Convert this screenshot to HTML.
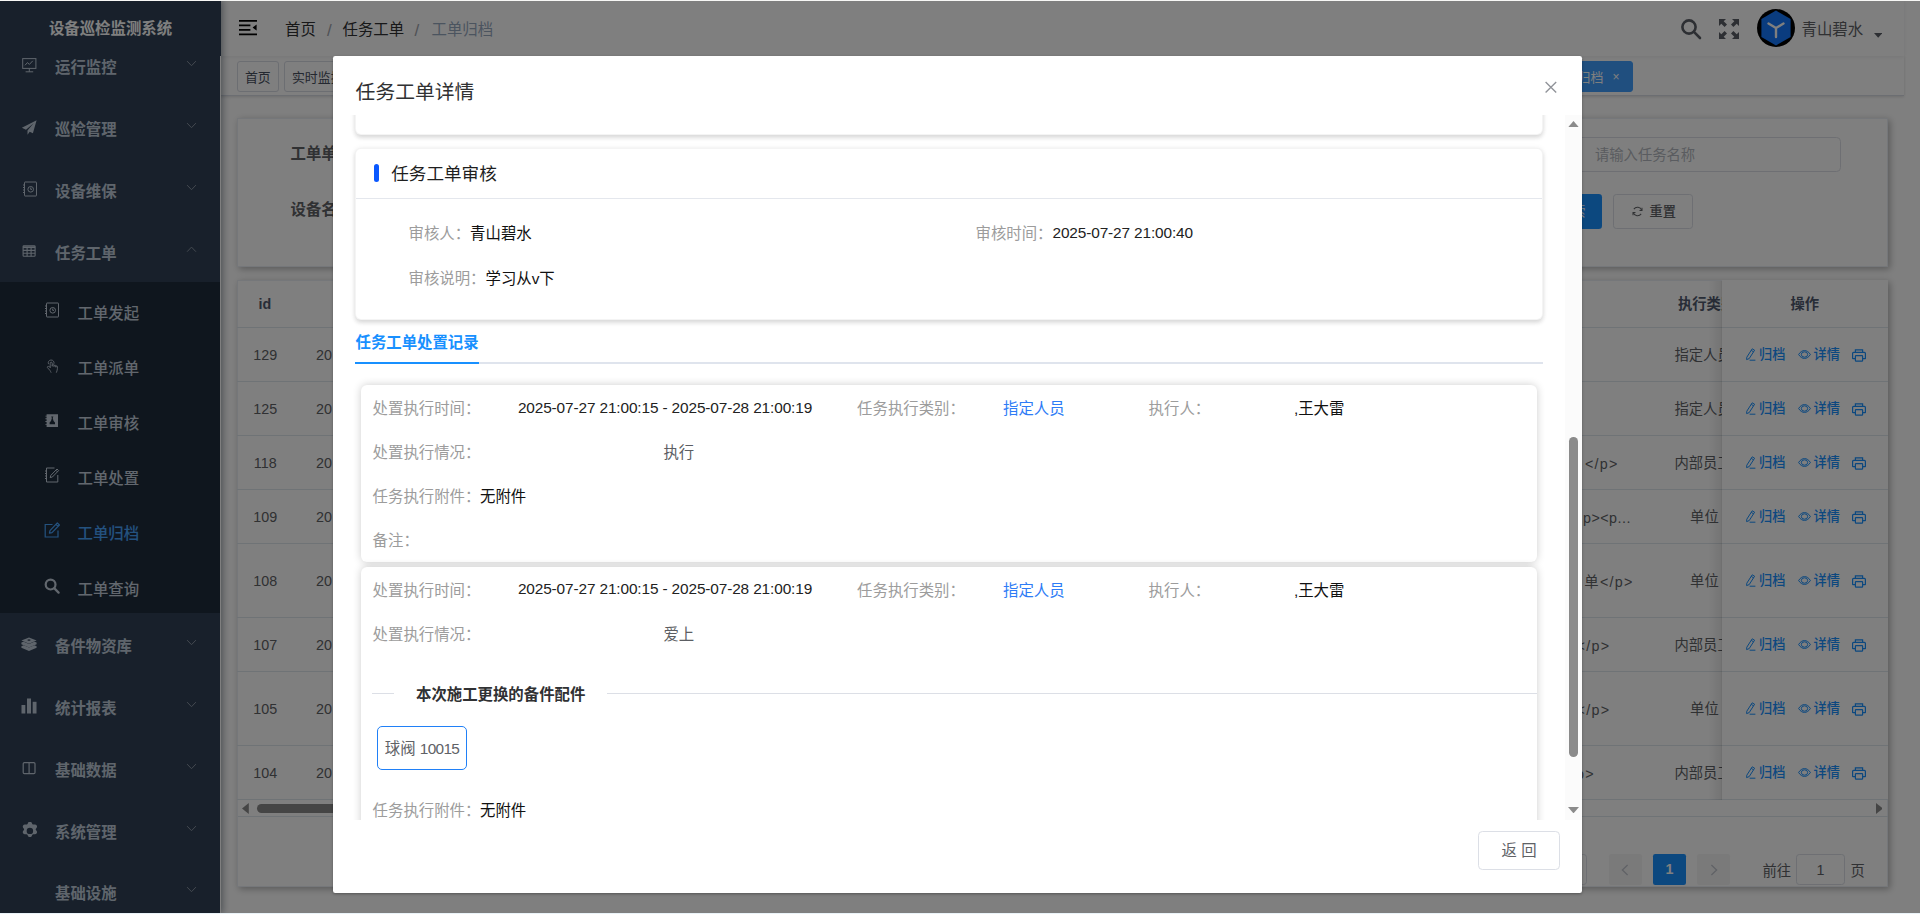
<!DOCTYPE html>
<html lang="zh-CN">
<head>
<meta charset="utf-8">
<title>设备巡检监测系统</title>
<style>
*{box-sizing:border-box;}
html,body{margin:0;padding:0;width:1920px;height:914px;overflow:hidden;background:#fff;
  font-family:"Liberation Sans","Noto Sans CJK SC",sans-serif;color:#303133;}
.abs{position:absolute;}
#page{position:absolute;left:0;top:0;width:1920px;height:914px;overflow:hidden;background:#fff;}
/* ---------- sidebar ---------- */
#sidebar{position:absolute;left:0;top:0;width:220px;height:914px;background:#304156;z-index:5;
  box-shadow:3px 0 7px rgba(0,21,41,.38);}
#logo{position:absolute;left:0;top:0;width:221px;height:56px;background:#304156;color:#fff;font-weight:bold;
  font-size:15.4px;line-height:58px;text-align:center;}
.mi{position:absolute;left:0;width:220px;height:62px;color:#bfcbd9;font-size:15.4px;font-weight:bold;}
.mi .t{position:absolute;left:55px;top:0;line-height:62px;white-space:nowrap;}
.mi svg.ic{position:absolute;left:21.4px;top:19.8px;width:16px;height:16px;}
.mi svg.ar{position:absolute;left:186px;top:21.4px;width:11px;height:11px;}
#submenu{position:absolute;left:0;top:281.5px;width:220px;height:331px;background:#1f2d3d;}
.si{position:absolute;left:0;width:220px;height:55px;color:#c4cfdc;font-size:15.4px;font-weight:500;}
.si .t{position:absolute;left:77.5px;top:0;line-height:55px;white-space:nowrap;}
.si svg.ic{position:absolute;left:44.2px;top:15.8px;width:16px;height:16px;}
.si.act{color:#48a4ff;}
/* ---------- navbar ---------- */
#navbar{position:absolute;left:220px;top:0;width:1684px;height:56px;background:#fff;box-shadow:0 1px 4px rgba(0,21,41,.08);z-index:2;}
#tags{position:absolute;left:220px;top:56px;width:1684px;height:40px;background:#fff;border-bottom:1px solid #d8dce5;
  box-shadow:0 1px 3px 0 rgba(0,0,0,.12),0 0 3px 0 rgba(0,0,0,.04);z-index:1;}
.tag{position:absolute;top:5.2px;height:30.8px;border:1px solid #d8dce5;border-radius:3px;font-size:12.9px;line-height:31px;color:#495060;background:#fff;padding:0 7.2px;white-space:nowrap;}
.tag.act{background:#409eff;color:#fff;border-color:#409eff;}
.bc{position:absolute;top:0;line-height:60px;font-size:15.4px;color:#303133;white-space:nowrap;}
/* ---------- main ---------- */
.card{position:absolute;background:#fff;box-shadow:2px 2px 7px rgba(0,0,0,.3);border:1px solid #ebeef5;}
.lbl{position:absolute;font-size:15.4px;font-weight:bold;color:#606266;white-space:nowrap;}
.th{position:absolute;font-size:14.3px;font-weight:bold;color:#515a6e;white-space:nowrap;line-height:20px;}
.td{position:absolute;font-size:14.3px;color:#606266;white-space:nowrap;line-height:20px;}
.hl{position:absolute;left:0;height:1px;background:#dfe6ec;}
.act-l{position:absolute;font-size:13.2px;font-weight:500;color:#1890ff;white-space:nowrap;line-height:20px;}
.op svg{position:absolute;}
/* ---------- overlay + dialog ---------- */
#overlay{position:absolute;left:0;top:0;width:1920px;height:914px;background:rgba(0,0,0,.5);z-index:10;}
#dlg{position:absolute;left:333px;top:56px;width:1249px;height:837px;background:#fff;border-radius:2.2px;z-index:11;
  box-shadow:0 1px 3px rgba(0,0,0,.3);}
#dlg .title{position:absolute;left:22.6px;top:23px;font-size:19.8px;line-height:26.4px;color:#303133;white-space:nowrap;}
#scroll{position:absolute;left:0;top:59.4px;width:1249px;height:705px;overflow:hidden;}
#track{position:absolute;right:0;top:0;width:17px;height:705px;background:#fbfbfb;}
.dcard{position:absolute;background:#fff;border:1px solid rgba(0,0,0,.045);border-radius:6px;box-shadow:0 2.2px 4.4px rgba(0,0,0,.13),0 0 6.6px rgba(0,0,0,.05);}
.rcard{position:absolute;background:#fff;border-radius:6px;box-shadow:0 0 8px rgba(0,0,0,.2);}
.dl{position:absolute;margin-top:1.3px;font-size:15.4px;line-height:26px;color:#9c9c9c;white-space:nowrap;}
.dv{position:absolute;margin-top:1.3px;font-size:15.4px;line-height:26px;color:#111;white-space:nowrap;}
.rl{position:absolute;margin-top:1.3px;font-size:15.4px;line-height:44px;color:#9c9c9c;white-space:nowrap;}
.rv{position:absolute;margin-top:1.3px;font-size:15.4px;line-height:44px;color:#1a1a1a;white-space:nowrap;}
.rv.blue{color:#2e7cf6;}
.rv.gr{color:#5c5e63;}
</style>
</head>
<body>
<div id="page">

<!-- ================= SIDEBAR ================= -->
<div id="sidebar">
  <div id="submenu"></div>
  <div id="logo">设备巡检监测系统</div>
  <!-- menu items inserted below -->
  <div class="mi" style="top:37.1px"><svg class="ic" viewBox="0 0 16 16" fill="none" stroke="currentColor" stroke-width="1"><rect x="1.7" y="1.6" width="13.2" height="9.8" /><path d="M4 8.3 L6.4 5.6 L8.4 7.4 L11.8 3.8"/><path d="M8.3 11.4 V14.8 M4.6 14.8 H12.2"/></svg><span class="t">运行监控</span><svg class="ar" viewBox="0 0 12 12" fill="none" stroke="#8a95a3" stroke-width="1.05"><path d="M1.2 3.4 L6 8.4 L10.8 3.4"/></svg></div>
  <div class="mi" style="top:99.1px"><svg class="ic" viewBox="0 0 16 16" fill="currentColor"><path d="M15.6 1.2 L0.9 8.8 L5 10.7 L12.6 4.2 L6.5 11.5 L6.5 15.8 L8.7 12.7 L11.9 14.3 Z"/></svg><span class="t">巡检管理</span><svg class="ar" viewBox="0 0 12 12" fill="none" stroke="#8a95a3" stroke-width="1.05"><path d="M1.2 3.4 L6 8.4 L10.8 3.4"/></svg></div>
  <div class="mi" style="top:161.1px"><svg class="ic" style="margin-left:0.9px;margin-top:0.5px" viewBox="0 0 16 16" fill="none" stroke="currentColor" stroke-width="1"><rect x="2.5" y="1" width="12" height="14" rx="0.5"/><circle cx="8.7" cy="8.3" r="2.8"/><path d="M8.7 6.6 V8.4 H10"/><path d="M1 4 H3 M1 6.5 H3 M1 9 H3 M1 11.5 H3" /></svg><span class="t">设备维保</span><svg class="ar" viewBox="0 0 12 12" fill="none" stroke="#8a95a3" stroke-width="1.05"><path d="M1.2 3.4 L6 8.4 L10.8 3.4"/></svg></div>
  <div class="mi" style="top:223.1px"><svg class="ic" viewBox="0 0 16 16" fill="none" stroke="currentColor" stroke-width="1.1"><rect x="2.1" y="2.8" width="12" height="10.4" rx="0.8"/><path d="M2.1 4.2 H14.1" stroke-width="1.8"/><path d="M2.1 7.4 H14.1 M2.1 10.3 H14.1 M6.1 4 V13.2 M10.1 4 V13.2"/></svg><span class="t">任务工单</span><svg class="ar" viewBox="0 0 12 12" fill="none" stroke="#8a95a3" stroke-width="1.05"><path d="M1.2 8.4 L6 3.4 L10.8 8.4"/></svg></div>
  <div class="mi" style="top:616.1px"><svg class="ic" viewBox="0 0 16 16" fill="currentColor"><path d="M8 1.4 L15.6 4.6 L8 7.8 L0.4 4.6 Z M6 4 L8 5 L10 4 L8 3.2 Z" fill-rule="evenodd"/><path d="M0.4 6.6 L2.6 5.7 L8 8 L13.4 5.7 L15.6 6.6 V8.2 L8 11.4 L0.4 8.2 Z"/><path d="M0.4 10.2 L2.6 9.3 L8 11.6 L13.4 9.3 L15.6 10.2 V11.8 L8 15 L0.4 11.8 Z"/></svg><span class="t">备件物资库</span><svg class="ar" viewBox="0 0 12 12" fill="none" stroke="#8a95a3" stroke-width="1.05"><path d="M1.2 3.4 L6 8.4 L10.8 3.4"/></svg></div>
  <div class="mi" style="top:678.1px"><svg class="ic" viewBox="0 0 16 16" fill="currentColor"><rect x="0.5" y="7" width="3.8" height="8.5"/><rect x="6" y="0.5" width="4" height="15"/><rect x="11.7" y="3.8" width="3.8" height="11.7"/></svg><span class="t">统计报表</span><svg class="ar" viewBox="0 0 12 12" fill="none" stroke="#8a95a3" stroke-width="1.05"><path d="M1.2 3.4 L6 8.4 L10.8 3.4"/></svg></div>
  <div class="mi" style="top:740.1px"><svg class="ic" viewBox="0 0 16 16" fill="none" stroke="currentColor" stroke-width="1.2"><rect x="2.2" y="2.6" width="11.8" height="11" rx="1.2"/><path d="M8.1 2.6 V13.6"/></svg><span class="t">基础数据</span><svg class="ar" viewBox="0 0 12 12" fill="none" stroke="#8a95a3" stroke-width="1.05"><path d="M1.2 3.4 L6 8.4 L10.8 3.4"/></svg></div>
  <div class="mi" style="top:801.6px"><svg class="ic" style="width:17.8px;height:17.8px;margin-left:-0.6px;margin-top:0.6px" viewBox="0 0 16 16" fill="currentColor"><path fill-rule="evenodd" d="M6.3 0.8 a1.9 1.9 0 0 1 3.4 0 l0.5 1 a1 1 0 0 0 1 0.5 l1.2 -0.1 a1.9 1.9 0 0 1 1.7 2.9 l-0.7 1 a1 1 0 0 0 0 1.1 l0.7 1 a1.9 1.9 0 0 1 -1.7 2.9 l-1.2 -0.1 a1 1 0 0 0 -1 0.5 l-0.5 1 a1.9 1.9 0 0 1 -3.4 0 l-0.5 -1 a1 1 0 0 0 -1 -0.5 l-1.2 0.1 a1.9 1.9 0 0 1 -1.7 -2.9 l0.7 -1 a1 1 0 0 0 0 -1.1 l-0.7 -1 a1.9 1.9 0 0 1 1.7 -2.9 l1.2 0.1 a1 1 0 0 0 1 -0.5 Z M8 5.1 a2.9 2.9 0 1 0 0 5.8 a2.9 2.9 0 1 0 0 -5.8 Z"/></svg><span class="t">系统管理</span><svg class="ar" viewBox="0 0 12 12" fill="none" stroke="#8a95a3" stroke-width="1.05"><path d="M1.2 3.4 L6 8.4 L10.8 3.4"/></svg></div>
  <div class="mi" style="top:863.1px"><span class="t">基础设施</span><svg class="ar" viewBox="0 0 12 12" fill="none" stroke="#8a95a3" stroke-width="1.05"><path d="M1.2 3.4 L6 8.4 L10.8 3.4"/></svg></div>
  <div class="si" style="top:286.2px"><svg class="ic" viewBox="0 0 16 16" fill="none" stroke="currentColor" stroke-width="1"><rect x="2.5" y="1" width="12" height="14" rx="0.5"/><circle cx="8.7" cy="8.3" r="2.8"/><path d="M8.7 6.6 V8.4 H10"/><path d="M1 4 H3 M1 6.5 H3 M1 9 H3 M1 11.5 H3" /></svg><span class="t">工单发起</span></div>
  <div class="si" style="top:341.2px"><svg class="ic" style="height:14.2px;margin-top:1.6px" preserveAspectRatio="none" viewBox="0 0 16 16" fill="none" stroke="currentColor" stroke-width="0.9" stroke-linecap="round" stroke-linejoin="round"><path d="M6.2 9.5 V4.6 a1 1 0 0 1 2 0 V8 M8.2 7.2 a0.9 0.9 0 0 1 1.8 0 V8.4 M10 7.8 a0.9 0.9 0 0 1 1.8 0 V9 M11.8 8.6 a0.8 0.8 0 0 1 1.6 0 V11 c0 2 -0.8 3 -1 4 M6.2 9.2 L4.6 8.4 a0.9 0.9 0 0 0 -1.2 1.2 L6 13 c0.4 0.8 0.8 1.4 1 2"/><path d="M4.4 5.4 a3 3 0 1 1 5.6 -0.4"/></svg><span class="t">工单派单</span></div>
  <div class="si" style="top:396.2px"><svg class="ic" style="height:15px;margin-top:1.3px" preserveAspectRatio="none" viewBox="0 0 16 16" fill="currentColor"><path d="M2.6 1.2 H14 V14.8 H2.6 V12.6 H1.4 V11.6 H2.6 V9.6 H1.4 V8.6 H2.6 V6.6 H1.4 V5.6 H2.6 V3.8 H1.4 V2.8 H2.6 Z M7.2 3.6 L7.9 5.2 L7 8.4 L5.6 10.2 V12 H11 V10.2 L9.6 8.4 L8.7 5.2 L9.4 3.6 Z" fill-rule="evenodd"/></svg><span class="t">工单审核</span></div>
  <div class="si" style="top:451.2px"><svg class="ic" viewBox="0 0 16 16" fill="none" stroke="currentColor" stroke-width="1"><path d="M13.8 8 V15 H2.5 V1 H10.5"/><path d="M1 4 H3 M1 6.5 H3 M1 9 H3 M1 11.5 H3"/><path d="M13 2 L14.6 3.6 L8.4 10 L6.2 10.6 L6.8 8.4 Z M11.8 3.2 L13.4 4.8" stroke-linejoin="round"/></svg><span class="t">工单处置</span></div>
  <div class="si act" style="top:506.2px"><svg class="ic" viewBox="0 0 16 16" fill="none" stroke="currentColor" stroke-width="1.2"><path d="M14 8.5 V15 H1.2 V2.5 H8.5"/><path d="M13.3 0.9 L15.4 3 L8 10.6 L5.4 11.2 L6 8.6 Z M12 2.3 L14 4.3" stroke-linejoin="round"/></svg><span class="t">工单归档</span></div>
  <div class="si" style="top:562.2px"><svg class="ic" viewBox="0 0 16 16" fill="none" stroke="currentColor" stroke-width="2.2" stroke-linecap="round"><circle cx="6.6" cy="6.6" r="4.9"/><path d="M10.4 10.4 L14.6 14.6"/></svg><span class="t">工单查询</span></div>
  <div class="abs" style="left:220px;top:56px;width:1px;height:858px;background:#fff;"></div>
</div>

<!-- ================= NAVBAR ================= -->
<div id="navbar">
  <svg class="abs" style="left:19px;top:19.2px;width:18px;height:17px" viewBox="0 0 18 17" fill="none" stroke="#000" stroke-width="1.75"><path d="M0 1.8 H18 M0 6.3 H11.4 M0 10.8 H11.4 M0 15.3 H18"/><path d="M17.6 5.6 V11.6 L13.6 8.6 Z" fill="#000" stroke="none"/></svg>
  <span class="bc" style="left:65px;">首页</span>
  <span class="bc" style="left:107px;color:#9ea3ab;font-size:17px;line-height:62.5px;">/</span>
  <span class="bc" style="left:122.5px;">任务工单</span>
  <span class="bc" style="left:194.5px;color:#9ea3ab;font-size:17px;line-height:62.5px;">/</span>
  <span class="bc" style="left:211.5px;color:#97a8be;">工单归档</span>
  <svg class="abs" style="left:1460px;top:18px;width:22px;height:22px" viewBox="0 0 22 22" fill="none" stroke="#5a5e66" stroke-width="2.6" stroke-linecap="round"><circle cx="9" cy="9" r="6.6"/><path d="M14.2 14.2 L20 20"/></svg>
  <svg class="abs" style="left:1499px;top:19px;width:20px;height:20px" viewBox="0 0 20 20" fill="#5a5e66"><path d="M0 0 H7 L4.7 2.3 L8 5.6 L5.6 8 L2.3 4.7 L0 7 Z"/><path d="M20 0 V7 L17.7 4.7 L14.4 8 L12 5.6 L15.3 2.3 L13 0 Z"/><path d="M0 20 V13 L2.3 15.3 L5.6 12 L8 14.4 L4.7 17.7 L7 20 Z"/><path d="M20 20 H13 L15.3 17.7 L12 14.4 L14.4 12 L17.7 15.3 L20 13 Z"/></svg>
  <svg class="abs" style="left:1537px;top:9.4px;width:38px;height:38px" viewBox="0 0 38 38"><circle cx="19" cy="19" r="19" fill="#000"/><path d="M19 1.6 L33.6 10 V28 L19 36.4 L4.4 28 V10 Z" fill="#1478ff"/><path d="M19 19 V28 M19 19 L11.5 14.5 M19 19 L26.5 14.5" stroke="#fff" stroke-width="2.4" stroke-linecap="round" fill="none"/></svg>
  <span class="abs" style="left:1581.5px;top:0;line-height:60px;font-size:15.4px;color:#606266;white-space:nowrap;">青山碧水</span>
  <svg class="abs" style="left:1653.6px;top:33.4px;width:8.4px;height:4.8px" viewBox="0 0 8.4 4.8"><path d="M0 0 H8.4 L4.2 4.8 Z" fill="#5a5e66"/></svg>
</div>
<div id="tags">
  <span class="tag" style="left:16.8px;">首页</span>
  <span class="tag" style="left:63.8px;">实时监控</span>
  <span class="tag act" style="left:1300px;width:113px;text-align:right;padding-right:0;"><span style="position:absolute;right:28.6px;top:0;">工单归档</span><span style="position:absolute;right:12.6px;top:0;font-size:12px;">×</span></span>
</div>

<!-- ================= MAIN ================= -->
<div id="main">
<div class="card" style="left:237px;top:117.6px;width:1651px;height:149px;"></div>
<span class="lbl" style="left:290.5px;top:143px;line-height:22px;">工单单号</span>
<span class="lbl" style="left:290.5px;top:199px;line-height:22px;">设备名称</span>
<div class="abs" style="left:1500px;top:137.4px;width:341.3px;height:34.6px;border:1px solid #dcdfe6;border-radius:4.4px;"></div>
<span class="abs" style="left:1595px;top:144.5px;font-size:14.3px;line-height:20px;color:#b4b8c0;white-space:nowrap;">请输入任务名称</span>
<div class="abs" style="left:1520px;top:194px;width:81.8px;height:35px;background:#1890ff;border-radius:3.3px;"></div>
<span class="abs" style="left:1559px;top:201.5px;font-size:13.2px;line-height:20px;color:#fff;white-space:nowrap;">搜索</span>
<div class="abs" style="left:1613.2px;top:194px;width:79.4px;height:35px;border:1px solid #dcdfe6;border-radius:3.3px;"></div>
<svg class="abs" style="left:1631.5px;top:205.5px;width:11px;height:11px" viewBox="0 0 12 12" fill="none" stroke="#606266" stroke-width="1.1"><path d="M10.6 4.6 A4.9 4.9 0 0 0 2 3.4 M1.4 7.4 A4.9 4.9 0 0 0 10 8.6"/><path d="M10.9 2 V4.8 H8.2 M1.1 10 V7.2 H3.8"/></svg>
<span class="abs" style="left:1649.5px;top:201.5px;font-size:13.2px;line-height:20px;font-weight:500;color:#606266;white-space:nowrap;">重置</span>
<div class="card" style="left:237px;top:279.7px;width:1651px;height:607px;"></div>
<div class="abs" style="left:237px;top:279.7px;width:1484.5px;height:540px;overflow:hidden;"><span class="th" style="left:21.5px;top:14.5px;">id</span><span class="th" style="left:1441px;top:14.5px;">执行类别</span><div class="hl" style="top:47.5px;width:1651px;"></div><div class="hl" style="top:101.6px;width:1651px;"></div><span class="td" style="left:0;width:56.4px;text-align:center;top:65.1px;">129</span><span class="td" style="left:79px;top:65.1px;width:16.1px;overflow:hidden;">2025-07-27</span><span class="td" style="left:1437.5px;top:65.2px;">指定人员</span><div class="hl" style="top:155.7px;width:1651px;"></div><span class="td" style="left:0;width:56.4px;text-align:center;top:119.2px;">125</span><span class="td" style="left:79px;top:119.2px;width:16.1px;overflow:hidden;">2025-07-27</span><span class="td" style="left:1437.5px;top:119.3px;">指定人员</span><div class="hl" style="top:209.7px;width:1651px;"></div><span class="td" style="left:0;width:56.4px;text-align:center;top:173.2px;">118</span><span class="td" style="left:79px;top:173.2px;width:16.1px;overflow:hidden;">2025-07-27</span><span class="td" style="left:1437.5px;top:173.3px;">内部员工</span><span class="td" style="right:102.8px;top:174.1px;letter-spacing:1.3px;">&lt;/p&gt;</span><div class="hl" style="top:263.6px;width:1651px;"></div><span class="td" style="left:0;width:56.4px;text-align:center;top:227.1px;">109</span><span class="td" style="left:79px;top:227.1px;width:16.1px;overflow:hidden;">2025-07-27</span><span class="td" style="left:1453.1px;top:227.2px;">单位</span><span class="td" style="right:90.5px;top:228.0px;letter-spacing:0.5px;">p&gt;&lt;p...</span><div class="hl" style="top:337.8px;width:1651px;"></div><span class="td" style="left:0;width:56.4px;text-align:center;top:291.2px;">108</span><span class="td" style="left:79px;top:291.2px;width:16.1px;overflow:hidden;">2025-07-27</span><span class="td" style="left:1453.1px;top:291.3px;">单位</span><span class="td" style="right:87.8px;top:292.1px;letter-spacing:1.3px;">单&lt;/p&gt;</span><div class="hl" style="top:391.6px;width:1651px;"></div><span class="td" style="left:0;width:56.4px;text-align:center;top:355.2px;">107</span><span class="td" style="left:79px;top:355.2px;width:16.1px;overflow:hidden;">2025-07-27</span><span class="td" style="left:1437.5px;top:355.3px;">内部员工</span><span class="td" style="right:111.2px;top:356.1px;letter-spacing:1.3px;">&lt;/p&gt;</span><div class="hl" style="top:465.6px;width:1651px;"></div><span class="td" style="left:0;width:56.4px;text-align:center;top:419.1px;">105</span><span class="td" style="left:79px;top:419.1px;width:16.1px;overflow:hidden;">2025-07-27</span><span class="td" style="left:1453.1px;top:419.2px;">单位</span><span class="td" style="right:111.2px;top:420.0px;letter-spacing:1.3px;">&lt;/p&gt;</span><div class="hl" style="top:519.6px;width:1651px;"></div><span class="td" style="left:0;width:56.4px;text-align:center;top:483.1px;">104</span><span class="td" style="left:79px;top:483.1px;width:16.1px;overflow:hidden;">2025-07-27</span><span class="td" style="left:1437.5px;top:483.2px;">内部员工</span><span class="td" style="right:126.7px;top:484.0px;letter-spacing:1.3px;">p&gt;</span></div>
<div class="abs op" style="left:1721.5px;top:279.7px;width:166.5px;height:520.3px;background:#fff;overflow:hidden;"><span class="th" style="left:0;width:166.5px;text-align:center;top:14.5px;">操作</span><div class="hl" style="top:101.6px;width:166.5px;"></div><svg style="left:23.6px;top:68.6px;width:11px;height:13px" viewBox="0 0 11 13" fill="none" stroke="#1890ff" stroke-width="1"><path d="M7.2 0.8 L9.6 2.2 L4.2 10.6 L1.6 11.6 L1.8 9.2 Z M6.2 2.4 L8.6 3.8"/><path d="M4.6 12.2 H10.4"/></svg><span class="act-l" style="left:37.6px;top:65.2px;">归档</span><svg style="left:76.9px;top:70.0px;width:13px;height:9px" viewBox="0 0 13 9" fill="none" stroke="#1890ff" stroke-width="1"><path d="M0.6 4.5 C2.6 1.4 4.6 0.6 6.5 0.6 C8.4 0.6 10.4 1.4 12.4 4.5 C10.4 7.6 8.4 8.4 6.5 8.4 C4.6 8.4 2.6 7.6 0.6 4.5 Z"/><ellipse cx="6.5" cy="4.5" rx="3.2" ry="2.7"/></svg><span class="act-l" style="left:92px;top:65.2px;">详情</span><svg style="left:130.5px;top:69.4px;width:14px;height:13px" viewBox="0 0 14 13" fill="none" stroke="#1890ff" stroke-width="1.2"><path d="M3.4 3.4 V0.8 H10.6 V3.4"/><path d="M3.4 9.6 H1 a0.4 0.4 0 0 1 -0.4 -0.4 V4.4 a1 1 0 0 1 1 -1 H12.4 a1 1 0 0 1 1 1 V9.2 a0.4 0.4 0 0 1 -0.4 0.4 H10.6"/><rect x="3.4" y="6.6" width="7.2" height="5.6" rx="0.6"/></svg><div class="hl" style="top:155.7px;width:166.5px;"></div><svg style="left:23.6px;top:122.7px;width:11px;height:13px" viewBox="0 0 11 13" fill="none" stroke="#1890ff" stroke-width="1"><path d="M7.2 0.8 L9.6 2.2 L4.2 10.6 L1.6 11.6 L1.8 9.2 Z M6.2 2.4 L8.6 3.8"/><path d="M4.6 12.2 H10.4"/></svg><span class="act-l" style="left:37.6px;top:119.3px;">归档</span><svg style="left:76.9px;top:124.1px;width:13px;height:9px" viewBox="0 0 13 9" fill="none" stroke="#1890ff" stroke-width="1"><path d="M0.6 4.5 C2.6 1.4 4.6 0.6 6.5 0.6 C8.4 0.6 10.4 1.4 12.4 4.5 C10.4 7.6 8.4 8.4 6.5 8.4 C4.6 8.4 2.6 7.6 0.6 4.5 Z"/><ellipse cx="6.5" cy="4.5" rx="3.2" ry="2.7"/></svg><span class="act-l" style="left:92px;top:119.3px;">详情</span><svg style="left:130.5px;top:123.5px;width:14px;height:13px" viewBox="0 0 14 13" fill="none" stroke="#1890ff" stroke-width="1.2"><path d="M3.4 3.4 V0.8 H10.6 V3.4"/><path d="M3.4 9.6 H1 a0.4 0.4 0 0 1 -0.4 -0.4 V4.4 a1 1 0 0 1 1 -1 H12.4 a1 1 0 0 1 1 1 V9.2 a0.4 0.4 0 0 1 -0.4 0.4 H10.6"/><rect x="3.4" y="6.6" width="7.2" height="5.6" rx="0.6"/></svg><div class="hl" style="top:209.7px;width:166.5px;"></div><svg style="left:23.6px;top:176.7px;width:11px;height:13px" viewBox="0 0 11 13" fill="none" stroke="#1890ff" stroke-width="1"><path d="M7.2 0.8 L9.6 2.2 L4.2 10.6 L1.6 11.6 L1.8 9.2 Z M6.2 2.4 L8.6 3.8"/><path d="M4.6 12.2 H10.4"/></svg><span class="act-l" style="left:37.6px;top:173.3px;">归档</span><svg style="left:76.9px;top:178.1px;width:13px;height:9px" viewBox="0 0 13 9" fill="none" stroke="#1890ff" stroke-width="1"><path d="M0.6 4.5 C2.6 1.4 4.6 0.6 6.5 0.6 C8.4 0.6 10.4 1.4 12.4 4.5 C10.4 7.6 8.4 8.4 6.5 8.4 C4.6 8.4 2.6 7.6 0.6 4.5 Z"/><ellipse cx="6.5" cy="4.5" rx="3.2" ry="2.7"/></svg><span class="act-l" style="left:92px;top:173.3px;">详情</span><svg style="left:130.5px;top:177.5px;width:14px;height:13px" viewBox="0 0 14 13" fill="none" stroke="#1890ff" stroke-width="1.2"><path d="M3.4 3.4 V0.8 H10.6 V3.4"/><path d="M3.4 9.6 H1 a0.4 0.4 0 0 1 -0.4 -0.4 V4.4 a1 1 0 0 1 1 -1 H12.4 a1 1 0 0 1 1 1 V9.2 a0.4 0.4 0 0 1 -0.4 0.4 H10.6"/><rect x="3.4" y="6.6" width="7.2" height="5.6" rx="0.6"/></svg><div class="hl" style="top:263.6px;width:166.5px;"></div><svg style="left:23.6px;top:230.6px;width:11px;height:13px" viewBox="0 0 11 13" fill="none" stroke="#1890ff" stroke-width="1"><path d="M7.2 0.8 L9.6 2.2 L4.2 10.6 L1.6 11.6 L1.8 9.2 Z M6.2 2.4 L8.6 3.8"/><path d="M4.6 12.2 H10.4"/></svg><span class="act-l" style="left:37.6px;top:227.2px;">归档</span><svg style="left:76.9px;top:232.0px;width:13px;height:9px" viewBox="0 0 13 9" fill="none" stroke="#1890ff" stroke-width="1"><path d="M0.6 4.5 C2.6 1.4 4.6 0.6 6.5 0.6 C8.4 0.6 10.4 1.4 12.4 4.5 C10.4 7.6 8.4 8.4 6.5 8.4 C4.6 8.4 2.6 7.6 0.6 4.5 Z"/><ellipse cx="6.5" cy="4.5" rx="3.2" ry="2.7"/></svg><span class="act-l" style="left:92px;top:227.2px;">详情</span><svg style="left:130.5px;top:231.4px;width:14px;height:13px" viewBox="0 0 14 13" fill="none" stroke="#1890ff" stroke-width="1.2"><path d="M3.4 3.4 V0.8 H10.6 V3.4"/><path d="M3.4 9.6 H1 a0.4 0.4 0 0 1 -0.4 -0.4 V4.4 a1 1 0 0 1 1 -1 H12.4 a1 1 0 0 1 1 1 V9.2 a0.4 0.4 0 0 1 -0.4 0.4 H10.6"/><rect x="3.4" y="6.6" width="7.2" height="5.6" rx="0.6"/></svg><div class="hl" style="top:337.8px;width:166.5px;"></div><svg style="left:23.6px;top:294.7px;width:11px;height:13px" viewBox="0 0 11 13" fill="none" stroke="#1890ff" stroke-width="1"><path d="M7.2 0.8 L9.6 2.2 L4.2 10.6 L1.6 11.6 L1.8 9.2 Z M6.2 2.4 L8.6 3.8"/><path d="M4.6 12.2 H10.4"/></svg><span class="act-l" style="left:37.6px;top:291.3px;">归档</span><svg style="left:76.9px;top:296.1px;width:13px;height:9px" viewBox="0 0 13 9" fill="none" stroke="#1890ff" stroke-width="1"><path d="M0.6 4.5 C2.6 1.4 4.6 0.6 6.5 0.6 C8.4 0.6 10.4 1.4 12.4 4.5 C10.4 7.6 8.4 8.4 6.5 8.4 C4.6 8.4 2.6 7.6 0.6 4.5 Z"/><ellipse cx="6.5" cy="4.5" rx="3.2" ry="2.7"/></svg><span class="act-l" style="left:92px;top:291.3px;">详情</span><svg style="left:130.5px;top:295.5px;width:14px;height:13px" viewBox="0 0 14 13" fill="none" stroke="#1890ff" stroke-width="1.2"><path d="M3.4 3.4 V0.8 H10.6 V3.4"/><path d="M3.4 9.6 H1 a0.4 0.4 0 0 1 -0.4 -0.4 V4.4 a1 1 0 0 1 1 -1 H12.4 a1 1 0 0 1 1 1 V9.2 a0.4 0.4 0 0 1 -0.4 0.4 H10.6"/><rect x="3.4" y="6.6" width="7.2" height="5.6" rx="0.6"/></svg><div class="hl" style="top:391.6px;width:166.5px;"></div><svg style="left:23.6px;top:358.7px;width:11px;height:13px" viewBox="0 0 11 13" fill="none" stroke="#1890ff" stroke-width="1"><path d="M7.2 0.8 L9.6 2.2 L4.2 10.6 L1.6 11.6 L1.8 9.2 Z M6.2 2.4 L8.6 3.8"/><path d="M4.6 12.2 H10.4"/></svg><span class="act-l" style="left:37.6px;top:355.3px;">归档</span><svg style="left:76.9px;top:360.1px;width:13px;height:9px" viewBox="0 0 13 9" fill="none" stroke="#1890ff" stroke-width="1"><path d="M0.6 4.5 C2.6 1.4 4.6 0.6 6.5 0.6 C8.4 0.6 10.4 1.4 12.4 4.5 C10.4 7.6 8.4 8.4 6.5 8.4 C4.6 8.4 2.6 7.6 0.6 4.5 Z"/><ellipse cx="6.5" cy="4.5" rx="3.2" ry="2.7"/></svg><span class="act-l" style="left:92px;top:355.3px;">详情</span><svg style="left:130.5px;top:359.5px;width:14px;height:13px" viewBox="0 0 14 13" fill="none" stroke="#1890ff" stroke-width="1.2"><path d="M3.4 3.4 V0.8 H10.6 V3.4"/><path d="M3.4 9.6 H1 a0.4 0.4 0 0 1 -0.4 -0.4 V4.4 a1 1 0 0 1 1 -1 H12.4 a1 1 0 0 1 1 1 V9.2 a0.4 0.4 0 0 1 -0.4 0.4 H10.6"/><rect x="3.4" y="6.6" width="7.2" height="5.6" rx="0.6"/></svg><div class="hl" style="top:465.6px;width:166.5px;"></div><svg style="left:23.6px;top:422.6px;width:11px;height:13px" viewBox="0 0 11 13" fill="none" stroke="#1890ff" stroke-width="1"><path d="M7.2 0.8 L9.6 2.2 L4.2 10.6 L1.6 11.6 L1.8 9.2 Z M6.2 2.4 L8.6 3.8"/><path d="M4.6 12.2 H10.4"/></svg><span class="act-l" style="left:37.6px;top:419.2px;">归档</span><svg style="left:76.9px;top:424.0px;width:13px;height:9px" viewBox="0 0 13 9" fill="none" stroke="#1890ff" stroke-width="1"><path d="M0.6 4.5 C2.6 1.4 4.6 0.6 6.5 0.6 C8.4 0.6 10.4 1.4 12.4 4.5 C10.4 7.6 8.4 8.4 6.5 8.4 C4.6 8.4 2.6 7.6 0.6 4.5 Z"/><ellipse cx="6.5" cy="4.5" rx="3.2" ry="2.7"/></svg><span class="act-l" style="left:92px;top:419.2px;">详情</span><svg style="left:130.5px;top:423.4px;width:14px;height:13px" viewBox="0 0 14 13" fill="none" stroke="#1890ff" stroke-width="1.2"><path d="M3.4 3.4 V0.8 H10.6 V3.4"/><path d="M3.4 9.6 H1 a0.4 0.4 0 0 1 -0.4 -0.4 V4.4 a1 1 0 0 1 1 -1 H12.4 a1 1 0 0 1 1 1 V9.2 a0.4 0.4 0 0 1 -0.4 0.4 H10.6"/><rect x="3.4" y="6.6" width="7.2" height="5.6" rx="0.6"/></svg><div class="hl" style="top:519.6px;width:166.5px;"></div><svg style="left:23.6px;top:486.6px;width:11px;height:13px" viewBox="0 0 11 13" fill="none" stroke="#1890ff" stroke-width="1"><path d="M7.2 0.8 L9.6 2.2 L4.2 10.6 L1.6 11.6 L1.8 9.2 Z M6.2 2.4 L8.6 3.8"/><path d="M4.6 12.2 H10.4"/></svg><span class="act-l" style="left:37.6px;top:483.2px;">归档</span><svg style="left:76.9px;top:488.0px;width:13px;height:9px" viewBox="0 0 13 9" fill="none" stroke="#1890ff" stroke-width="1"><path d="M0.6 4.5 C2.6 1.4 4.6 0.6 6.5 0.6 C8.4 0.6 10.4 1.4 12.4 4.5 C10.4 7.6 8.4 8.4 6.5 8.4 C4.6 8.4 2.6 7.6 0.6 4.5 Z"/><ellipse cx="6.5" cy="4.5" rx="3.2" ry="2.7"/></svg><span class="act-l" style="left:92px;top:483.2px;">详情</span><svg style="left:130.5px;top:487.4px;width:14px;height:13px" viewBox="0 0 14 13" fill="none" stroke="#1890ff" stroke-width="1.2"><path d="M3.4 3.4 V0.8 H10.6 V3.4"/><path d="M3.4 9.6 H1 a0.4 0.4 0 0 1 -0.4 -0.4 V4.4 a1 1 0 0 1 1 -1 H12.4 a1 1 0 0 1 1 1 V9.2 a0.4 0.4 0 0 1 -0.4 0.4 H10.6"/><rect x="3.4" y="6.6" width="7.2" height="5.6" rx="0.6"/></svg><div class="hl" style="top:47.5px;width:166.5px;"></div></div>
<div class="abs" style="left:1707.5px;top:280.7px;width:14px;height:519px;background:linear-gradient(to right,rgba(0,0,0,0),rgba(0,0,0,.09));"></div>
<div class="abs" style="left:1721px;top:280.7px;width:1px;height:519px;background:rgba(0,0,0,.035);"></div>
<div class="abs" style="left:238px;top:816px;width:1650px;height:1px;background:#dfe6ec;"></div>
<svg class="abs" style="left:241.9px;top:803px;width:6.8px;height:11px" viewBox="0 0 6.8 11"><path d="M6.8 0 V11 L0 5.5 Z" fill="#8b8b8b"/></svg>
<svg class="abs" style="left:1875.6px;top:803px;width:6.8px;height:11px" viewBox="0 0 6.8 11"><path d="M0 0 V11 L6.8 5.5 Z" fill="#8b8b8b"/></svg>
<div class="abs" style="left:257px;top:804.2px;width:400px;height:9px;border-radius:4.5px;background:#8b8b8b;"></div>
<div class="abs" style="left:1480px;top:854.4px;width:106.7px;height:30.4px;border:1px solid #dcdfe6;border-radius:3.3px;"></div>
<div class="abs" style="left:1609.2px;top:854.4px;width:32.6px;height:30.4px;background:#f4f4f5;border-radius:2.2px;"></div>
<svg class="abs" style="left:1620.5px;top:863.5px;width:8px;height:12px" viewBox="0 0 8 12" fill="none" stroke="#c0c4cc" stroke-width="1.3"><path d="M6.6 1 L1.4 6 L6.6 11"/></svg>
<div class="abs" style="left:1653.1px;top:854px;width:32.8px;height:30.8px;background:#1890ff;border-radius:2.2px;color:#fff;font-weight:bold;font-size:14.3px;line-height:31.8px;text-align:center;">1</div>
<div class="abs" style="left:1696.9px;top:854.4px;width:32.9px;height:30.4px;background:#f4f4f5;border-radius:2.2px;"></div>
<svg class="abs" style="left:1709.5px;top:863.5px;width:8px;height:12px" viewBox="0 0 8 12" fill="none" stroke="#c0c4cc" stroke-width="1.3"><path d="M1.4 1 L6.6 6 L1.4 11"/></svg>
<span class="abs" style="left:1762.5px;top:860.5px;font-size:14.3px;line-height:20px;color:#606266;white-space:nowrap;">前往</span>
<div class="abs" style="left:1795.5px;top:854.4px;width:49.8px;height:30.4px;border:1px solid #dcdfe6;border-radius:3.3px;color:#606266;font-size:14.3px;line-height:31.4px;text-align:center;">1</div>
<span class="abs" style="left:1850.5px;top:860.5px;font-size:14.3px;line-height:20px;color:#606266;white-space:nowrap;">页</span>
</div>

<!-- ================= OVERLAY ================= -->
<div id="overlay"></div>

<!-- ================= DIALOG ================= -->
<div id="dlg">
  <div class="title">任务工单详情</div>
  <div id="scroll">
<div id="track"></div>
<svg class="abs" style="left:1235.0px;top:5.5px;width:11px;height:6.4px" viewBox="0 0 11 6.4"><path d="M0 6.4 H11 L5.5 0 Z" fill="#8b8b8b"/></svg>
<svg class="abs" style="left:1235.0px;top:691.4px;width:11px;height:6.4px" viewBox="0 0 11 6.4"><path d="M0 0 H11 L5.5 6.4 Z" fill="#8b8b8b"/></svg>
<div class="abs" style="left:1236.2px;top:321.6px;width:8.8px;height:320px;border-radius:4.4px;background:#8b8b8b;"></div>
<div class="dcard" style="left:22.0px;top:-60px;width:1188px;height:79.8px;"></div>
<div class="dcard" style="left:22.0px;top:32.6px;width:1188px;height:171.7px;"></div>
<div class="abs" style="left:23.0px;top:82.6px;width:1186px;height:1px;background:#e4e7ed;"></div>
<div class="abs" style="left:41.2px;top:48.9px;width:5px;height:17.6px;border-radius:2.5px;background:#0a58ff;"></div>
<span class="abs" style="left:58.2px;top:45.9px;font-size:17.6px;line-height:26px;color:#1f1f1f;white-space:nowrap;">任务工单审核</span>
<span class="dl" style="left:75.5px;top:104.6px;">审核人：</span>
<span class="dv" style="left:137.1px;top:104.6px;">青山碧水</span>
<span class="dl" style="left:642.5px;top:104.6px;">审核时间：</span>
<span class="dv" style="left:719.5px;top:104.6px;color:#222;letter-spacing:-0.13px;margin-top:0.1px;">2025-07-27 21:00:40</span>
<span class="dl" style="left:75.5px;top:149.6px;">审核说明：</span>
<span class="dv" style="left:152.5px;top:149.6px;">学习从v下</span>
<div class="abs" style="left:22.0px;top:246.4px;width:1188px;height:2.2px;background:#dfe4ed;"></div>
<div class="abs" style="left:22.0px;top:246.4px;width:123.6px;height:2.2px;background:#1890ff;"></div>
<span class="abs" style="left:22.5px;top:206.0px;font-size:15.4px;line-height:44px;font-weight:bold;color:#1890ff;white-space:nowrap;">任务工单处置记录</span>
<div class="rcard" style="left:28.0px;top:269.6px;width:1176px;height:177.0px;"></div>
<span class="rl" style="left:39.6px;top:270.6px;">处置执行时间：</span>
<span class="rv" style="left:184.9px;top:270.6px;color:#222;letter-spacing:-0.13px;margin-top:0.1px;">2025-07-27 21:00:15 - 2025-07-28 21:00:19</span>
<span class="rl" style="left:524.1px;top:270.6px;">任务执行类别：</span>
<span class="rv blue" style="left:670.0px;top:270.6px;">指定人员</span>
<span class="rl" style="left:815.6px;top:270.6px;">执行人：</span>
<span class="rv" style="left:960.9px;top:270.6px;color:#111;">,王大雷</span>
<span class="rl" style="left:39.6px;top:314.4px;">处置执行情况：</span>
<span class="rv gr" style="left:295.8px;top:314.4px;width:100px;text-align:center;">执行</span>
<span class="rl" style="left:39.6px;top:358.5px;">任务执行附件：</span>
<span class="rv" style="left:147.0px;top:358.5px;color:#111;">无附件</span>
<span class="rl" style="left:39.6px;top:402.6px;">备注：</span>
<div class="rcard" style="left:28.0px;top:451.8px;width:1176px;height:330.0px;"></div>
<span class="rl" style="left:39.6px;top:452.0px;">处置执行时间：</span>
<span class="rv" style="left:184.9px;top:452.0px;color:#222;letter-spacing:-0.13px;margin-top:0.1px;">2025-07-27 21:00:15 - 2025-07-28 21:00:19</span>
<span class="rl" style="left:524.1px;top:452.0px;">任务执行类别：</span>
<span class="rv blue" style="left:670.0px;top:452.0px;">指定人员</span>
<span class="rl" style="left:815.6px;top:452.0px;">执行人：</span>
<span class="rv" style="left:960.9px;top:452.0px;color:#111;">,王大雷</span>
<span class="rl" style="left:39.6px;top:496.6px;">处置执行情况：</span>
<span class="rv gr" style="left:295.8px;top:496.6px;width:100px;text-align:center;">爱上</span>
<div class="abs" style="left:39.0px;top:577.4px;width:1165px;height:1px;background:#dcdfe6;"></div>
<span class="abs" style="left:61.0px;top:567.0px;padding:0 22px;background:#fff;font-size:15.4px;line-height:26px;font-weight:bold;color:#303133;white-space:nowrap;">本次施工更换的备件配件</span>
<div class="abs" style="left:44.0px;top:610.8px;width:90px;height:44px;border:1px solid #2080f7;border-radius:5px;font-size:15.4px;line-height:43px;color:#606266;text-align:left;padding-left:6.8px;white-space:nowrap;">球阀 <span style="letter-spacing:-0.7px;">10015</span></div>
<span class="rl" style="left:39.6px;top:672.6px;">任务执行附件：</span>
<span class="rv" style="left:147.0px;top:672.6px;color:#111;">无附件</span>
</div>
  <svg class="abs" style="left:1212.2px;top:25.4px;width:12px;height:12px" viewBox="0 0 12 12" fill="none" stroke="#909399" stroke-width="1.35"><path d="M0.6 0.9 L11.2 11.5 M11.2 0.9 L0.6 11.5"/></svg>
  <div class="abs" style="left:1145.4px;top:775px;width:81.4px;height:39.4px;border:1px solid #dcdfe6;border-radius:4.4px;font-size:15.4px;line-height:38px;color:#606266;text-align:center;white-space:pre;">返 回</div>

</div>

<div class="abs" style="left:0;top:0;width:1920px;height:1px;background:#f7f7f5;z-index:20;"></div>
<div class="abs" style="left:0;top:913px;width:1920px;height:1px;background:#eaf3f8;z-index:20;"></div>
</div>
</body>
</html>
